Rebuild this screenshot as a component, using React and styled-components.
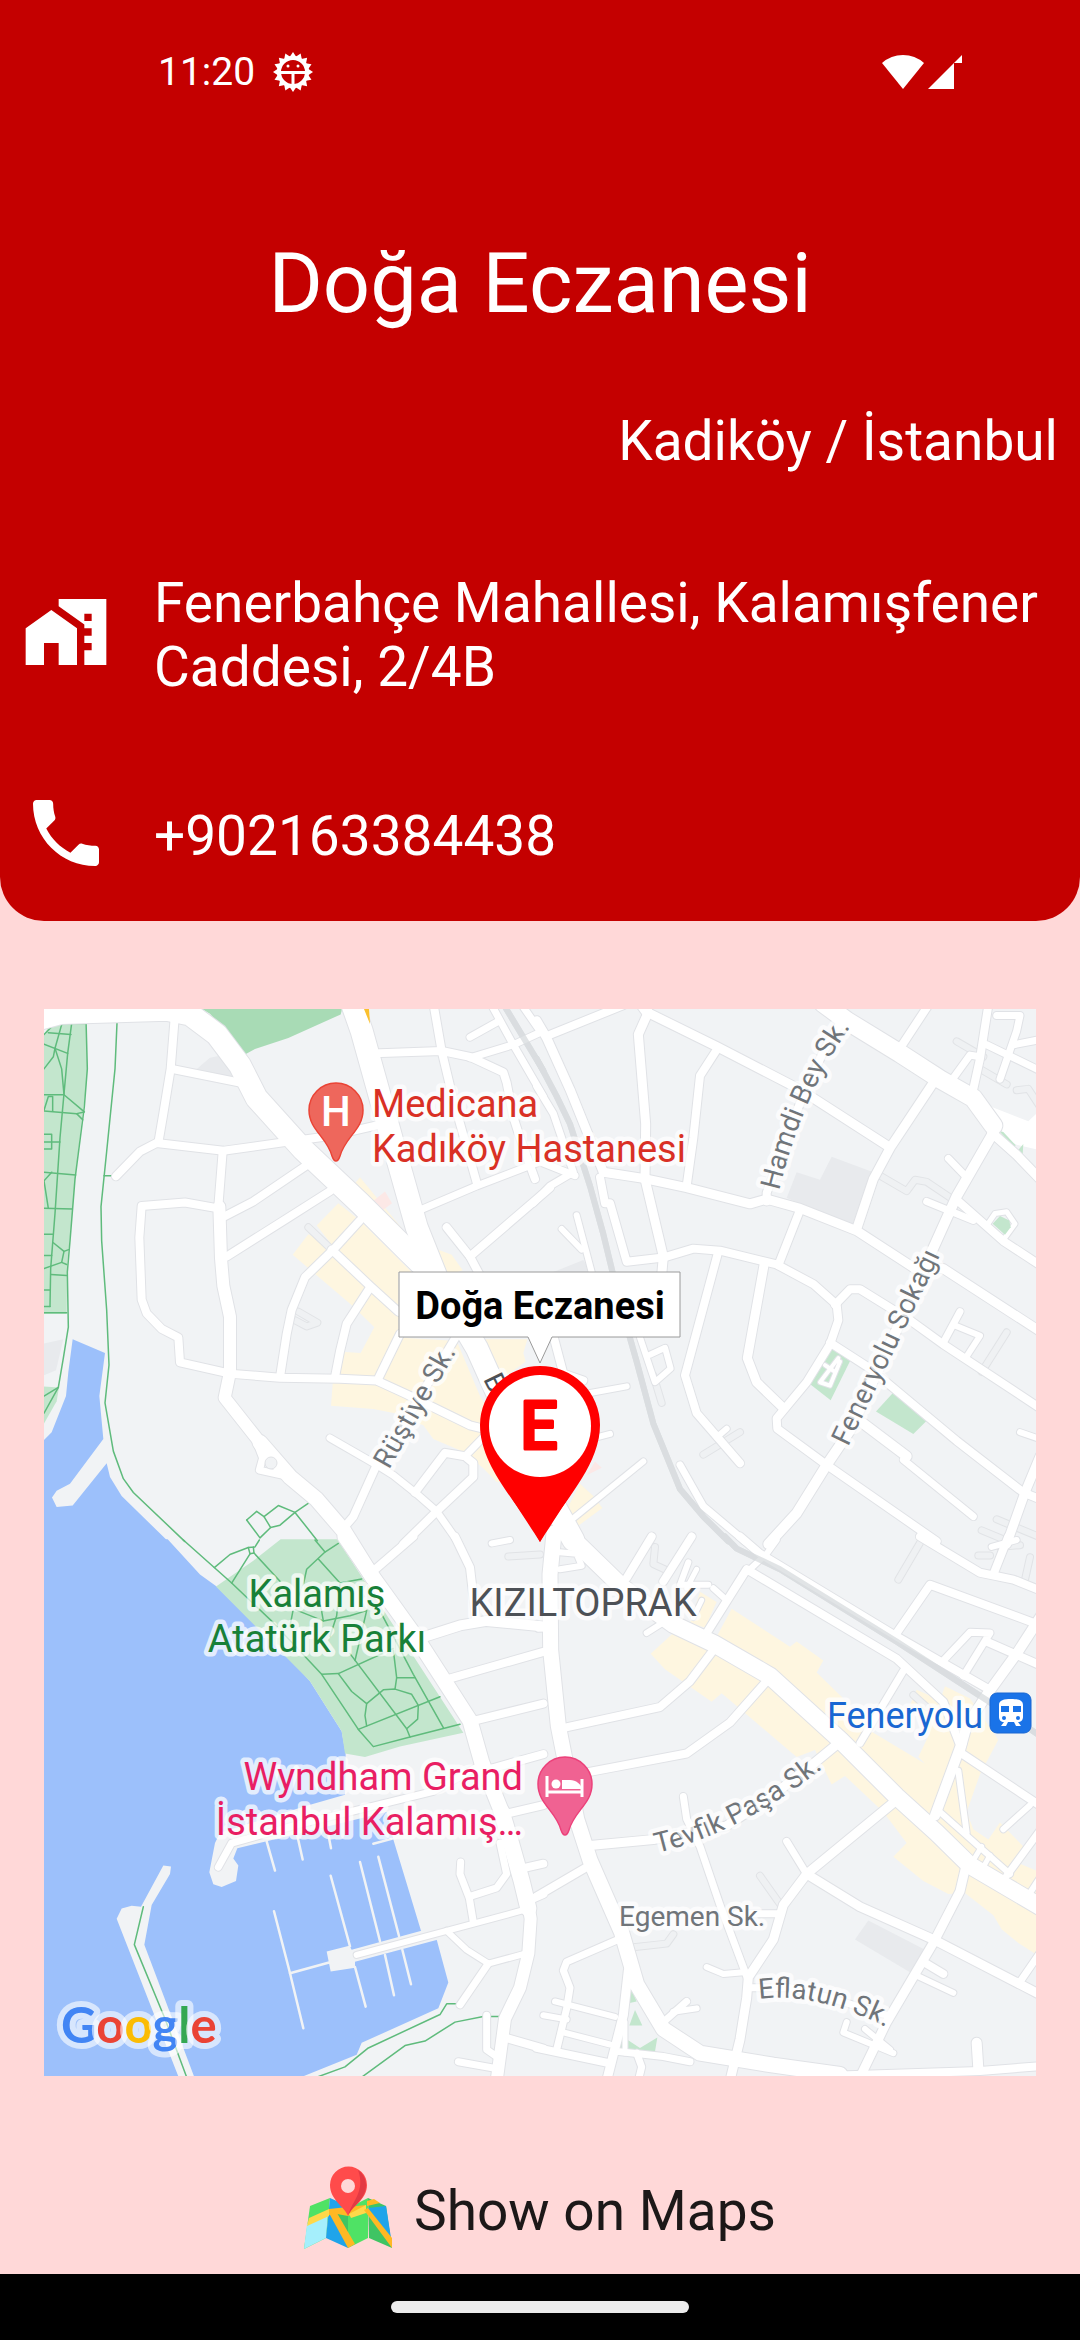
import React from "react";
import styled, { createGlobalStyle } from "styled-components";

const GlobalStyle = createGlobalStyle`
  *, *::before, *::after { box-sizing: border-box; }
  body { margin: 0; background: #ffd8d8; font-family: Roboto, "Noto Sans", sans-serif; }
`;

const Page = styled.div`
  min-height: 100vh;
  display: flex;
  flex-direction: column;
  background: #ffd8d8;
`;

const Header = styled.header`
  display: flex;
  flex-direction: column;
  padding-bottom: 44px;
  background: #c40000;
  color: #fff;
  border-radius: 0 0 44px 44px;
`;

const StatusBar = styled.div`
  display: flex;
  align-items: center;
  justify-content: space-between;
  height: 144px;
  padding: 0 116px 0 158px;
`;

const StatusGroup = styled.div`
  display: flex;
  align-items: center;
  gap: ${(p) => p.$gap}px;
`;

const Clock = styled.span`
  font-size: 39px;
  line-height: 48px;
`;

const Title = styled.h1`
  margin: 92px 22px 0;
  font-size: 83px;
  font-weight: 400;
  line-height: 96px;
  text-align: center;
`;

const Region = styled.p`
  margin: 77px 22px 0;
  font-size: 55px;
  line-height: 64px;
  text-align: right;
`;

const ContactRow = styled.div`
  display: flex;
  align-items: center;
  gap: 44px;
  margin-top: ${(p) => p.$top}px;
  padding: 0 22px;
`;

const ContactText = styled.p`
  margin: 0;
  padding-top: 6px;
  font-size: 55px;
  line-height: 64px;
`;

const PhoneLink = styled.a`
  padding-top: 6px;
  color: inherit;
  font-size: 55px;
  line-height: 64px;
  text-decoration: none;
`;

const ContactIcon = styled.svg`
  flex: none;
  width: 88px;
  height: 88px;
  fill: currentColor;
`;

const Main = styled.main`
  flex: 1;
  display: flex;
  flex-direction: column;
  align-items: center;
  gap: 88px;
  padding: 88px 44px 22px;
`;

const MapSvg = styled.svg`
  display: block;
  width: 100%;
  height: auto;
  background: #f1f3f5;
`;

const MapsButton = styled.button`
  display: flex;
  align-items: center;
  gap: 22px;
  padding: 0;
  border: 0;
  background: none;
  color: #1c1818;
  font-family: inherit;
  font-size: 55px;
  line-height: 64px;
  cursor: pointer;
`;

const ButtonText = styled.span`
  padding-top: 6px;
`;

const NavBar = styled.footer`
  display: flex;
  align-items: center;
  justify-content: center;
  height: 66px;
  background: #000;
`;

const NavPill = styled.div`
  width: 298px;
  height: 12px;
  border-radius: 6px;
  background: #ececec;
`;

const Label = styled.text`
  font-family: Roboto, "Noto Sans", sans-serif;
  font-size: ${(p) => p.$size || 38}px;
  fill: ${(p) => p.$color};
  stroke: rgba(255, 255, 255, 0.72);
  stroke-width: 9px;
  stroke-linejoin: round;
  paint-order: stroke;
`;

const Wordmark = styled.text`
  font-family: Lato, sans-serif;
  font-size: 49px;
  font-weight: 700;
  stroke: rgba(255, 255, 255, 0.6);
  stroke-width: 12px;
  stroke-linejoin: round;
  paint-order: stroke;
`;

const Symbol = styled.text`
  font-family: Roboto, sans-serif;
  font-weight: ${(p) => p.$weight};
  font-size: ${(p) => p.$size}px;
  fill: ${(p) => p.$color};
  text-anchor: middle;
`;

const YELLOW = "#fef6e0";
const PARK = "#c3e6cd";
const BLOCK = "#e8eaed";
const WATER = "#9cc0fb";
const LAND = "#f1f3f5";
const WHITE = "#ffffff";

/* The map is drawn as four tiles; each has its own local coordinate space. */
const TILES = [
  {
    id: "nw",
    at: "translate(-4 -9)",
    areas: [
      [PARK, "12,100 25,80 45,66 138,56 142,200 140,240 125,350 105,520 95,640 82,760 80,912 12,912"],
      ["#a8dbb5", "475,20 908,20 902,42 745,110 645,142 612,160 590,130 510,40"],
      [BLOCK, "465,205 510,168 550,160 580,225"],
      [WATER, "98,985 195,1025 178,1150 190,1275 90,1405 50,1425 36,1445 50,1472 98,1468 200,1345 210,1385 245,1440 384,1572 0,1572 0,1290 35,1255 78,1150 85,1080"],
      [PARK, "0,1122 57,1125 50,1165 0,1250"],
      [BLOCK, "0,1000 70,985 48,1075 0,1095"],
      [YELLOW, "960,515 1108,690 1105,712 930,550"],
      ["#fce8e6", "983,597 1035,556 1056,590 1012,622"],
      [YELLOW, "895,590 830,655 875,710 805,680 758,740 940,890 1003,950 962,1025 915,1022 880,1090 873,1178 1000,1188 1065,1200 1150,1235 1180,1275 1270,1312 1330,1360 1370,1400 1420,1400 1380,1250 1320,1150 1250,990 1075,980 1075,790 1115,790 960,640"],
      [YELLOW, "1195,725 1235,740 1268,785 1225,800"],
      [YELLOW, "1335,985 1462,985 1450,1025 1457,1050 1400,1090 1385,1085"],
    ],
    ghosts: ["805,660 875,725", "775,905 832,937 800,948 765,930"],
    roads: [
      [22, "-20,60 60,38 380,28 450,42 530,100 600,190 650,285 790,435 960,590 1110,735 1200,820"],
      [22, "925,-20 965,90 1060,420 1130,660 1200,830 1310,1010 1380,1160 1470,1340 1600,1568"],
      [8, "405,40 392,200 370,330 355,415"],
      [8, "395,200 600,240"],
      [8, "228,512 300,440 350,415 550,438 740,412 870,395 1020,362"],
      [8, "548,440 535,600"],
      [12, "538,600 543,750 550,830 570,920 570,1080 554,1155 660,1285"],
      [15, "660,1285 750,1385 830,1450 910,1540 1000,1680"],
      [8, "550,630 640,585 800,480"],
      [8, "560,745 740,635 870,555"],
      [8, "535,605 435,588 305,598 298,690 305,870 320,910 365,955 415,980 420,1052 570,1085 720,1097 900,1100 1010,1105 1100,1145 1290,1235 1330,1245"],
      [8, "960,640 880,725 795,805 755,900 740,970 720,1095"],
      [8, "875,725 990,830 1075,905"],
      [8, "990,835 920,940 900,1020 885,1095"],
      [8, "1080,970 1012,1105"],
      [8, "1250,975 1110,1200 1010,1350 940,1500 905,1540"],
      [7, "870,1272 1010,1350 1060,1380 1125,1430 1190,1485 1250,1568"],
      [8, "1125,1430 1215,1315 1275,1325 1300,1345 1300,1385 1190,1485 1090,1580"],
      [7, "1275,1325 1350,1250"],
      [7, "650,1285 668,1330 658,1365 750,1385"],
      [8, "1000,155 1205,148 1290,165 1390,210 1400,240 1420,340 1440,400 1485,520"],
      [7, "1290,168 1420,130 1510,90"],
      [8, "1182,20 1205,148 1240,290 1310,530"],
      [7, "1290,108 1375,62"],
      [7, "1355,15 1420,130 1510,280"],
      [7, "1450,20 1500,90"],
      [7, "1140,610 1310,540 1500,470 1605,510"],
      [8, "1530,545 1290,745"],
      [8, "1220,660 1290,745 1320,800"],
    ],
    paths: [
      "232,45 225,200 200,440 183,600 185,700 200,900 207,1060 195,1170 220,1310 250,1390 280,1430 434,1572",
      "138,56 142,200 133,310 105,520 90,700 82,790 85,950 70,1040 55,1125 12,1200",
      "192,510 218,510", "12,1150 55,1125",
      "12,100 45,68 138,68", "95,68 83,155 60,400 45,620 32,780 30,890", "66,68 45,140 65,200 72,275",
      "25,95 93,100", "12,128 83,155", "45,140 40,165 12,200", "12,275 72,275 133,325 110,330 128,348",
      "12,322 110,330", "12,390 35,390 35,433 12,433", "12,412 60,412", "12,500 107,508", "35,500 12,525 25,605", "12,605 97,607",
      "12,680 38,680", "40,705 72,730 65,762 12,780", "72,730 86,725", "65,762 80,768", "33,797 80,800", "12,842 30,842", "12,890 30,890", "12,908 80,908",
      "12,320 25,280 38,280 38,322", "12,742 35,742",
      "620,1510 650,1485 672,1500 715,1468 765,1488 810,1458",
      "672,1500 692,1532 660,1562 620,1510", "692,1532 720,1525 765,1488 832,1570",
    ],
    rails: ["1392,15 1510,205"],
    piers: [],
  },
  {
    id: "ne",
    at: "translate(496 -9)",
    areas: [
      [BLOCK, "875,455 1000,500 950,660 740,575 770,500 840,522"],
      [PARK, "880,1006 932,1045 872,1162 803,1110"],
      [PARK, "1060,1140 1160,1222 1120,1260 1008,1195"],
      [BLOCK, "40,790 130,755 150,790"],
      ["#fce8e6", "165,1340 185,1358 140,1380"],
      [YELLOW, "120,1405 160,1440 187,1475 115,1527 80,1480"],
      [WHITE, "1300,290 1465,352 1500,320 1500,436 1430,420 1340,375"],
      [PARK, "1376,380 1390,383 1427,422 1422,427"],
      [PARK, "1433,438 1450,418 1448,447"],
    ],
    ghosts: [
      "1400,965 1325,1080", "490,1320 600,1255", "1020,510 1100,555 1125,522 1160,528 1240,580",
      "340,1090 365,1170", "1250,120 1330,165", "1320,200 1400,245", "1430,262 1465,258 1500,310",
      "1370,1508 1500,1560", "1325,1540 1400,1570",
    ],
    roads: [
      [9, "320,35 530,135 780,260 1045,425"],
      [8, "20,105 250,15"],
      [9, "-10,60 20,110 90,260 190,500"],
      [9, "190,500 310,518 440,545 630,592 680,578 780,605 950,670 1125,780 1210,780 1500,962"],
      [9, "325,35 295,100 317,360 315,520 370,745 365,800"],
      [8, "305,20 320,40"],
      [8, "530,145 480,220 460,400 440,540"],
      [18, "850,10 920,60 1080,155 1200,230 1300,285 1360,365"],
      [8, "905,60 850,150 780,300 740,400 680,560 680,585"],
      [9, "1180,240 1050,430 1000,520 950,665"],
      [8, "1165,15 1080,140"],
      [8, "1345,15 1320,170 1295,280"],
      [7, "1370,45 1440,45 1430,90 1380,230"],
      [7, "1340,130 1500,205"],
      [7, "1420,130 1500,115"],
      [7, "1230,240 1290,160 1320,165"],
      [10, "1360,385 1250,570 1180,720 1050,1000 930,1250 860,1350 770,1490 685,1580"],
      [9, "1355,385 1430,450 1510,530"],
      [7, "1225,460 1275,510"],
      [7, "1160,585 1300,640"],
      [8, "1250,580 1390,700 1500,770"],
      [5, "1340,655 1365,620 1400,615 1425,650 1395,690"],
      [8, "780,610 715,770"],
      [8, "180,515 195,590 210,590 260,760 370,748 460,722 540,728 710,768 820,825 890,885 895,930 870,1000 800,1110 710,1215 712,1245 860,1350 1190,1572"],
      [8, "885,885 930,840 960,840 1110,930 1210,1000 1500,1185"],
      [8, "535,730 435,1090 470,1200 600,1345"],
      [6, "560,1245 530,1270"],
      [9, "672,770 622,1040 650,1110 730,1185"],
      [8, "870,995 990,1070 1250,1280 1450,1430 1500,1450"],
      [10, "970,1230 1100,1325"],
      [7, "1090,1335 1300,1500"],
      [9, "1500,1325 1455,1430 1400,1580"],
      [6, "1440,1255 1500,1275"],
      [7, "1210,995 1260,905"],
      [6, "1245,945 1320,975 1280,1035"],
      [6, "110,625 155,790"],
      [6, "65,665 125,725"],
      [7, "-10,250 40,330 100,500 30,540 -20,590"],
      [6, "300,980 345,1110 392,1070 375,1010 330,1030"],
      [7, "420,1350 490,1470 615,1572"],
      [6, "310,1340 100,1505"],
      [6, "130,1145 260,1122"],
      [6, "150,1275 210,1260"],
      [8, "40,975 70,1085 130,1105"],
      [4, "895,1040 840,1110 870,1120 900,1050"],
      [4, "855,1060 885,1080"],
    ],
    topAreas: [[PARK, "1380,627 1408,640 1412,660 1395,682 1358,650"]],
    paths: [],
    rails: ["-10,170 50,280 90,360 120,450 150,540 190,680 240,880 290,1050 340,1230 420,1420 490,1500 565,1572"],
    piers: [],
  },
  {
    id: "sw",
    at: "translate(-4 531)",
    areas: [
      [WATER, "0,-2 383,-2 480,100 530,135 640,240 750,345 810,410 905,555 917,620 915,740 800,772 540,850 525,880 508,965 520,1000 545,1008 588,990 595,945 580,925 592,895 680,875 1040,790 1060,870 1143,1135 1190,1160 1225,1285 1195,1360 965,1460 950,1495 770,1565 0,1565"],
      [LAND, "230,1100 245,1070 275,1062 303,1065 370,945 393,948 390,970 335,1060 313,1175 465,1565 418,1565"],
      [LAND, "1150,1133 935,1190 928,1178 860,1195 872,1253 945,1242 945,1225 1195,1160"],
      [PARK, "722,-2 892,-2 1270,560 1080,600 975,630 915,620 905,555 810,410 528,135 640,60"],
    ],
    ghosts: ["1405,48 1500,42"],
    roads: [
      [15, "915,-10 1000,110 1130,285 1290,525 1325,645 1385,790"],
      [16, "1385,790 1410,870 1445,990 1465,1070"],
      [12, "1465,1060 1472,1100 1465,1200 1440,1300 1395,1390 1370,1570"],
      [8, "1120,-10 1000,90"],
      [8, "1245,-10 1290,80 1308,230"],
      [10, "1140,285 1260,248 1340,235 1520,252"],
      [8, "1220,405 1510,325"],
      [8, "1300,525 1510,475"],
      [8, "1350,665 1510,622"],
      [8, "1400,795 1510,770"],
      [7, "535,950 575,880 780,825 1180,730 1320,655"],
      [6, "950,1205 1220,1135 1450,1075"],
      [7, "1262,935 1260,970 1288,1040 1300,1110"],
      [7, "1290,1035 1370,1010 1400,970 1380,880"],
      [6, "1220,1135 1280,1190 1345,1230 1460,1200"],
      [7, "1345,1230 1260,1350"],
      [7, "1340,1380 1340,1480 1370,1500"],
      [7, "1255,1515 1370,1535"],
      [8, "1395,1445 1510,1477"],
      [8, "1470,1045 1510,1028"],
      [8, "1440,955 1510,940"],
      [6, "1355,10 1410,0"],
    ],
    paths: [
      "430,0 575,125 700,240 845,390 955,550 1000,600 1110,572 1260,535", "955,550 1200,455",
      "845,390 895,388 1060,315", "895,388 935,440 980,475 975,510 980,540",
      "980,475 1030,435 1065,433 1115,448 1135,480 1133,520 1100,548 1110,572",
      "1065,433 1070,400 1060,320", "1070,400 1125,400", "1025,215 1120,390 1210,545", "930,330 1100,548",
      "825,0 855,35 895,10", "855,35 800,85 790,130 760,200 750,250", "835,55 900,125 965,113", "523,80 570,42 625,22 645,20 658,0",
      "575,125 630,40", "625,22 630,40 642,38 640,20", "642,38 720,120", "900,130 890,220 870,280", "760,200 850,235 930,220 980,205 945,350", "850,235 840,180",
      "310,1065 283,1175 375,1390 440,1560", "1260,1347 1220,1347 1200,1378 985,1475 915,1530 830,1560",
      "1385,1384 1330,1384 1245,1400 1155,1455 1095,1468 965,1560",
    ],
    rails: [],
    piers: [
      "702,1078 748,1250 790,1418", "872,975 930,1180", "945,1240 977,1355", "960,935 1020,1165", "1015,920 1077,1150",
      "1035,1205 1062,1322", "1087,1190 1113,1290", "680,875 705,960", "770,850 788,928", "862,840 873,895", "1000,882 1055,868",
      "750,1258 870,1226",
    ],
  },
  {
    id: "se",
    at: "translate(496 531)",
    areas: [
      [YELLOW, "480,150 530,180 495,255 450,240"],
      [YELLOW, "575,200 750,310 770,295 850,350 830,385 910,460 1000,560 1155,650 1135,630 1170,560 1110,480 1130,435 1200,465 1215,425 1290,460 1375,580 1320,680 1280,790 1300,840 1345,870 1380,820 1450,890 1440,940 1500,965 1500,1210 1435,1170 1385,1130 1360,1090 1275,1025 1225,1028 1150,990 1060,920 1100,880 1030,790 915,685 875,710 825,610 770,630 545,445 515,470 375,375 332,330 400,270 525,290"],
      [BLOCK, "985,1105 1155,1190 1110,1255 945,1160"],
      [PARK, "275,1305 290,1340 265,1345"],
      [PARK, "285,1365 307,1410 268,1410"],
      [PARK, "235,1480 345,1485 352,1445 300,1475 245,1440"],
    ],
    ghosts: [
      "660,975 722,1060", "260,1185 380,1172 400,1145", "1145,0 1075,115", "345,20 340,70 385,90",
      "1470,50 1455,115", "1120,450 1160,485", "1380,20 1440,15", "1350,45 1315,45",
    ],
    roads: [
      [17, "80,-20 250,140 400,245 520,300 690,395 900,580 1070,745 1190,850 1290,945 1510,1070"],
      [15, "42,-20 30,100 32,320 55,540 110,810 150,930 245,1140 290,1290 370,1420 480,1490 700,1525 900,1552"],
      [8, "600,-10 660,40 1070,280 1340,430"],
      [8, "500,270 620,85 1070,345 1210,470 1262,600"],
      [6, "630,85 680,40 710,0"],
      [6, "520,140 560,175"],
      [8, "1140,-10 1320,95 1420,115 1510,150"],
      [8, "1405,-10 1360,100"],
      [8, "1070,270 1170,130 1480,240"],
      [10, "1510,210 1430,330 1340,450 1280,540 1260,610"],
      [7, "1210,350 1290,268 1350,270 1270,395"],
      [8, "1340,295 1510,368"],
      [7, "1090,380 960,590"],
      [10, "1265,590 1185,800"],
      [8, "1265,620 1510,778"],
      [6, "1470,770 1390,840"],
      [6, "1255,670 1280,850"],
      [6, "1200,790 1410,970"],
      [7, "1400,975 1510,830"],
      [6, "1470,1025 1510,965"],
      [5, "1300,930 1325,890"],
      [5, "1330,950 1350,915"],
      [8, "75,545 360,485 450,410 520,320"],
      [8, "140,675 440,620 570,530 680,410"],
      [9, "895,590 820,650 700,740 560,830 340,870 150,887"],
      [9, "1070,755 800,970 730,1060 700,1160 625,1270 620,1330 600,1450 570,1570"],
      [7, "740,875 800,970"],
      [9, "800,970 960,1065 1180,1160 1510,1325"],
      [9, "1278,945 1260,1020 1180,1170 1040,1400 955,1570"],
      [7, "430,745 440,810 480,890 540,1060 625,1280"],
      [7, "590,1085 720,1085"],
      [6, "500,1240 550,1260 610,1255"],
      [7, "630,1300 750,1300 870,1330 1040,1380"],
      [8, "-10,1035 140,950"],
      [7, "235,1160 80,1225 70,1250 90,1300 80,1360 50,1480"],
      [6, "-5,330 30,325"],
      [6, "-5,258 30,255"],
      [9, "265,1250 250,1380 200,1570"],
      [8, "-10,1475 210,1520"],
      [6, "70,1430 210,1465"],
      [6, "10,1380 80,1392"],
      [6, "45,1340 225,1385"],
      [7, "230,1485 370,1500 450,1515"],
      [7, "370,1400 440,1340"],
      [6, "400,1370 470,1360"],
      [10, "1310,1460 1315,1535"],
      [8, "900,1555 1320,1542 1510,1527"],
      [6, "920,1400 910,1430 1060,1490"],
      [6, "975,1420 1050,1480"],
      [8, "1150,1225 1210,1260"],
      [6, "1130,1265 1240,1315"],
      [7, "1435,1290 1510,1185"],
      [8, "335,-10 260,110"],
      [8, "455,-10 370,120"],
      [6, "445,65 420,130 505,130"],
      [5, "470,85 440,140"],
      [6, "320,270 385,230"],
      [5, "485,175 460,225"],
      [7, "290,1490 305,1530 295,1570"],
      [6, "50,35 110,40 125,75 60,85"],
      [5, "255,1400 255,1490"],
      [6, "1355,20 1430,0"],
    ],
    paths: [],
    rails: ["555,-10 590,25 720,85 1070,295 1340,465 1510,575"],
    piers: [],
  },
];

const TILE_SCALE = "scale(0.33333 0.34437)";

const Tiles = ({ draw }) =>
  TILES.map((tile) => (
    <g key={tile.id} transform={`${tile.at} ${TILE_SCALE}`}>
      {draw(tile)}
    </g>
  ));

const Line = ({ points, width, color, opacity }) => (
  <polyline
    points={points}
    fill="none"
    stroke={color}
    strokeWidth={width}
    strokeOpacity={opacity}
    strokeLinecap="round"
    strokeLinejoin="round"
    vectorEffect="non-scaling-stroke"
  />
);

const Streets = () => (
  <>
    <Tiles draw={(t) => t.areas.map(([color, pts]) => <polygon key={pts} points={pts} fill={color} />)} />
    <Tiles draw={(t) => t.paths.map((pts) => <Line key={pts} points={pts} width={1.5} color="#5fbb7c" />)} />
    <Tiles draw={(t) => t.piers.map((pts) => <Line key={pts} points={pts} width={2.5} color={LAND} />)} />
    <Tiles draw={(t) => t.ghosts.map((pts) => <Line key={pts} points={pts} width={8} color="#e1e3e6" />)} />
    <Tiles draw={(t) => t.ghosts.map((pts) => <Line key={pts} points={pts} width={6} color="#eff1f3" />)} />
    <Tiles draw={(t) => t.roads.map(([w, pts]) => <Line key={pts} points={pts} width={w + 2} color="#e0e2e6" />)} />
    <Tiles draw={(t) => t.rails.map((pts) => <Line key={pts} points={pts} width={6} color="#dadde0" />)} />
    <Tiles draw={(t) => t.roads.map(([w, pts]) => <Line key={pts} points={pts} width={w} color={WHITE} />)} />
    <Tiles draw={(t) => t.rails.map((pts) => <Line key={pts} points={pts} width={6} color="#dadde0" opacity={0.8} />)} />
    <Tiles draw={(t) => (t.topAreas || []).map(([color, pts]) => <polygon key={pts} points={pts} fill={color} />)} />
    <circle cx="227" cy="454" r="6" fill={LAND} stroke="#e0e2e6" />
    <polygon points="320,0 325,0 326,15" fill="#fbc02d" />
  </>
);

const StreetLabel = ({ id, d, children }) => (
  <>
    <path id={id} d={d} fill="none" />
    <Label $size={28} $color="#70757a">
      <textPath href={`#${id}`}>{children}</textPath>
    </Label>
  </>
);

const PlacePin = ({ x, y, fill, stroke, children }) => (
  <g transform={`translate(${x} ${y})`}>
    <path
      d="M0 78c-2 0-3-2-4-5C-9 54-27 47-27 27a27 27 0 0 1 54 0C27 47 9 54 4 73c-1 3-2 5-4 5z"
      fill={fill}
      stroke={stroke}
      strokeWidth="1.5"
    />
    {children}
  </g>
);

const PharmacyMap = () => (
  <MapSvg viewBox="0 0 992 1067" role="img" aria-label="Doğa Eczanesi, Kadıköy">
    <Streets />

    <StreetLabel id="hamdi" d="M735 182 Q760 80 812 10">Hamdi Bey Sk.</StreetLabel>
    <StreetLabel id="feneryolu" d="M804 438 L906 226">Feneryolu Sokağı</StreetLabel>
    <StreetLabel id="rustiye" d="M345 461 L420 329">Rüştiye Sk.</StreetLabel>
    <StreetLabel id="tevfik" d="M613 844 Q705 822 795 746">Tevfik Paşa Sk.</StreetLabel>
    <StreetLabel id="eflatun" d="M715 990 Q772 982 850 1022">Eflatun Sk.</StreetLabel>
    <Label $size={28} $color="#70757a" x="575" y="917">Egemen Sk.</Label>
    <Label $size={28} $color="#4d5156" transform="translate(439 370) rotate(64)">B</Label>

    <Label $color="#d93025" x="328" y="108">Medicana</Label>
    <Label $color="#d93025" x="328" y="153">Kadıköy Hastanesi</Label>
    <Label $color="#188038" x="273" y="598" textAnchor="middle">Kalamış</Label>
    <Label $color="#188038" x="273" y="643" textAnchor="middle">Atatürk Parkı</Label>
    <Label $color="#e91e63" x="479" y="781" textAnchor="end">Wyndham Grand</Label>
    <Label $color="#e91e63" x="479" y="826" textAnchor="end">İstanbul Kalamış…</Label>
    <Label $color="#4d5156" x="539" y="607" textAnchor="middle">KIZILTOPRAK</Label>
    <Label $size={36} $color="#1967d2" x="939" y="719" textAnchor="end">Feneryolu</Label>

    <PlacePin x={292} y={74} fill="#ee675c" stroke="#ea4335">
      <Symbol $size={42} $weight={500} $color="#fff" y="43">H</Symbol>
    </PlacePin>
    <PlacePin x={521} y={748} fill="#f06292" stroke="#ec407a">
      <path d="M-18 19v21M17 22v18M-18 35h35" fill="none" stroke="#fff" strokeWidth="3" />
      <circle cx="-9" cy="27" r="4.5" fill="#fff" />
      <path d="M-3 32V23h8c6 0 11 4 12 9z" fill="#fff" />
    </PlacePin>

    <g transform="translate(946 684)">
      <rect width="41" height="40" rx="7" fill="#1a73e8" stroke="#1967d2" strokeWidth="1" />
      <path d="M9 12c0-5 5-6 12-6s12 1 12 6v12c0 3-2 5-5 5l3 4h-5l-2-4h-6l-2 4h-5l3-4c-3 0-5-2-5-5z" fill="#fff" />
      <path d="M11 13h8v6h-8zM23 13h8v6h-8z" fill="#1a73e8" />
      <circle cx="14" cy="25" r="2" fill="#1a73e8" />
      <circle cx="28" cy="25" r="2" fill="#1a73e8" />
    </g>

    <Wordmark x="17" y="1034">
      <tspan fill="#4285f4">G</tspan>
      <tspan fill="#ea4335">o</tspan>
      <tspan fill="#fbbc04">o</tspan>
      <tspan fill="#4285f4">g</tspan>
      <tspan fill="#34a853">l</tspan>
      <tspan fill="#ea4335">e</tspan>
    </Wordmark>

    <path d="M496 533C480 500 436 460 436 416a60 59 0 0 1 120 0c0 44-44 84-60 117z" fill="#f00" />
    <path d="M496 533C479 506 441 452 437 425h118c-4 27-42 81-59 108z" fill="#f00" />
    <circle cx="496" cy="417" r="51" fill="#fff" />
    <Symbol $size={66} $weight={500} $color="#f00" x="495" y="440" stroke="#f00" strokeWidth="3" strokeLinejoin="round">
      E
    </Symbol>

    <path
      d="M355 263H636V328H508L496 354L484 328H355Z"
      fill="#fff"
      stroke="#9a9a9a"
      strokeWidth="1"
    />
    <Symbol $size={38} $weight={700} $color="#000" x="496" y="310">Doğa Eczanesi</Symbol>
  </MapSvg>
);

const teeth = Array.from({ length: 16 }, (_, i) => i * 22.5);

const BugIcon = () => (
  <svg width="40" height="40" viewBox="0 0 40 40" aria-hidden="true">
    {teeth.map((a) => (
      <path key={a} d="M16 6L20 0L24 6Z" fill="#fff" transform={`rotate(${a} 20 20)`} />
    ))}
    <circle cx="20" cy="20" r="14" fill="none" stroke="#fff" strokeWidth="4" />
    <path d="M6 20.5H34M20 21V34" stroke="#fff" strokeWidth="3" />
    <circle cx="15" cy="14" r="1.5" fill="#fff" />
    <circle cx="25" cy="14" r="1.5" fill="#fff" />
  </svg>
);

const WifiIcon = () => (
  <svg width="42" height="36" viewBox="0 0 42 36" aria-hidden="true">
    <path d="M0 9Q9 1 21 1T42 9L21 35Z" fill="#fff" />
  </svg>
);

const SignalIcon = () => (
  <svg width="36" height="36" viewBox="0 0 36 36" aria-hidden="true">
    <path d="M0 35L26 9V35ZM26 9L34 1V9Z" fill="#fff" />
  </svg>
);

const MapPinIcon = () => (
  <svg width="88" height="88" viewBox="0 0 88 88" aria-hidden="true">
    <path d="M6 42L26 34L22 74L0 85Z" fill="#4fe265" />
    <path d="M3 60L24 49L22 74L0 85Z" fill="#a5effc" />
    <path d="M26 34L44 42V84L22 74Z" fill="#1fa4ea" />
    <path d="M33 50L44 48V75Z" fill="#3fc463" />
    <path d="M44 44L64 34V74L44 84Z" fill="#4fe265" />
    <path d="M64 34L82 42L88 84L65 74Z" fill="#3fc463" />
    <path d="M64 44L82 42L87 74Z" fill="#1fa4ea" />
    <path d="M5 54L25 45V52L3 62Z" fill="#ffd84a" />
    <path d="M25 45L62 41V47L44 52L33 50L25 51Z" fill="#ffb824" />
    <path d="M45 50L62 41V49L47 54Z" fill="#ffd84a" />
    <path d="M25 49H33L51 80L44 84Z" fill="#ffb824" />
    <path d="M60 46L64 44L88 74V84Z" fill="#ffb824" />
    <path d="M63 42V37L70 35L76 39Z" fill="#ffb824" />
    <path d="M44 52C41 43 26 36 26 21a18.5 18.5 0 0 1 37 0C63 36 47 43 44 52Z" fill="#ff4b4b" />
    <path d="M54 6C63 12 64 24 59 32C55 39 47 44 44 52C47 38 62 28 54 6Z" fill="#e33943" />
    <circle cx="44" cy="22" r="7" fill="#ffd8d8" />
  </svg>
);

export default function App() {
  return (
    <Page>
      <GlobalStyle />
      <Header>
        <StatusBar>
          <StatusGroup $gap={18}>
            <Clock>11:20</Clock>
            <BugIcon />
          </StatusGroup>
          <StatusGroup $gap={4}>
            <WifiIcon />
            <SignalIcon />
          </StatusGroup>
        </StatusBar>
        <Title>Doğa Eczanesi</Title>
        <Region>Kadiköy / İstanbul</Region>
        <ContactRow $top={92}>
          <ContactIcon viewBox="0 0 24 24" aria-hidden="true">
            <path d="M1 11v10h5v-6h4v6h5V11L8 6z" />
            <path d="M10 3v1.97l7 5V11h2v2h-2v2h2v2h-2v4h6V3H10zm9 6h-2V7h2v2z" />
          </ContactIcon>
          <ContactText>Fenerbahçe Mahallesi, Kalamışfener Caddesi, 2/4B</ContactText>
        </ContactRow>
        <ContactRow $top={90}>
          <ContactIcon viewBox="0 0 24 24" aria-hidden="true">
            <path d="M6.62 10.79c1.44 2.83 3.76 5.14 6.59 6.59l2.2-2.2c.27-.27.67-.36 1.02-.24 1.12.37 2.33.57 3.57.57.55 0 1 .45 1 1V20c0 .55-.45 1-1 1-9.39 0-17-7.61-17-17 0-.55.45-1 1-1h3.5c.55 0 1 .45 1 1 0 1.25.2 2.45.57 3.57.11.35.03.74-.25 1.02l-2.2 2.2z" />
          </ContactIcon>
          <PhoneLink href="tel:+902163384438">+902163384438</PhoneLink>
        </ContactRow>
      </Header>
      <Main>
        <PharmacyMap />
        <MapsButton type="button">
          <MapPinIcon />
          <ButtonText>Show on Maps</ButtonText>
        </MapsButton>
      </Main>
      <NavBar>
        <NavPill />
      </NavBar>
    </Page>
  );
}
